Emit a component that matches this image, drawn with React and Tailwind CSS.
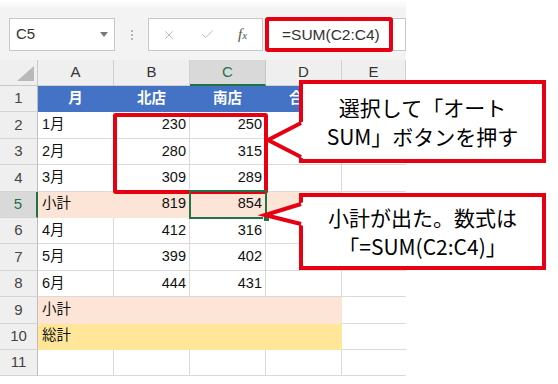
import { X, Check } from 'lucide-react';

const cols = ['A', 'B', 'C', 'D', 'E'];

const rows = [
    { n: 1, fill: 'head', cells: ['月', '北店', '南店', '合計'] },
    { n: 2, cells: ['1月', 230, 250] },
    { n: 3, cells: ['2月', 280, 315] },
    { n: 4, cells: ['3月', 309, 289] },
    { n: 5, fill: 'peach', cells: ['小計', 819, 854] },
    { n: 6, cells: ['4月', 412, 316] },
    { n: 7, cells: ['5月', 399, 402] },
    { n: 8, cells: ['6月', 444, 431] },
    { n: 9, fill: 'peach', cells: ['小計'] },
    { n: 10, fill: 'yellow', cells: ['総計'] },
    { n: 11, cells: [] },
];

const fills = {
    head: 'bg-[#4472c4] border-[#4472c4] text-white font-bold',
    peach: 'bg-[#fce4d6] border-[#fce4d6]',
    yellow: 'bg-[#ffe699] border-[#ffe699]',
};

const font = 'font-["Liberation_Sans","Noto_Sans_CJK_JP",sans-serif]';

const Cell = ({ row, i }) => {
    const value = row.cells[i];
    const filled = row.fill && i < 4;
    let align = typeof value === 'number' ? 'justify-end pr-[3px]' : 'justify-start pl-[4px]';
    if (row.fill === 'head') align = 'justify-center';
    const border = i === 4 ? 'border-b' : 'border-r border-b';

    return (
        <div
            className={`flex items-center text-[14.5px] ${border} ${align} ${
                filled ? fills[row.fill] : 'bg-white border-[#dadada]'
            } ${row.fill === 'head' ? '' : 'text-[#111]'}`}
        >
            {value}
        </div>
    );
};

const Callout = ({ className, children }) => (
    <div
        className={`absolute flex flex-col items-center justify-center border-4 border-[#e60012] bg-white text-[21px] leading-[29px] text-black font-["Noto_Sans_CJK_JP",sans-serif] ${className}`}
    >
        {children}
    </div>
);

const App = () => {
    return (
        <div className={`relative h-[384px] w-[558px] overflow-hidden bg-white ${font}`}>
            <div className="w-[406px]">
                {/* toolbar */}
                <div className="h-[7px] bg-gradient-to-b from-white to-[#f6f6f6]" />
                <div className="flex h-[53px] items-start bg-[#f3f3f3] pl-[9px] pt-[11px]">
                    <div className="flex h-[33px] w-[106px] items-center justify-between border border-[#c8c8c8] bg-white pl-[6px] pr-[6px]">
                        <span className="text-[15px] text-[#333]">C5</span>
                        <svg width="8" height="5" viewBox="0 0 8 5">
                            <polygon points="0,0 8,0 4,5" fill="#777" />
                        </svg>
                    </div>
                    <div className="flex h-[33px] w-[33px] flex-col items-center justify-center gap-[2px]">
                        <div className="size-[2px] bg-[#b5b5b5]" />
                        <div className="size-[2px] bg-[#b5b5b5]" />
                        <div className="size-[2px] bg-[#b5b5b5]" />
                    </div>
                    <div className="flex h-[33px] w-[115px] items-center border border-[#c8c8c8] bg-white pl-[13px]">
                        <X size={14} strokeWidth={1.5} className="text-[#b3b3b3]" />
                        <Check size={15} strokeWidth={1.5} className="ml-[24px] text-[#b3b3b3]" />
                        <span className='ml-[23px] font-["Liberation_Serif",serif] text-[15px] italic text-[#555]'>
                            f<span className="text-[11px]">x</span>
                        </span>
                    </div>
                    <div className="ml-[2px] flex h-[33px] flex-1 items-center border border-[#c8c8c8] bg-white pl-[16px]">
                        <span className="text-[15.5px] text-[#333]">=SUM(C2:C4)</span>
                    </div>
                </div>

                {/* sheet */}
                <div className="grid grid-cols-[38px_76px_76px_76px_76px_64px] grid-rows-[26px_repeat(11,26.4px)]">
                    <div className="flex items-end justify-end border-b border-r border-[#c8c8c8] bg-[#efefef] pb-[4px] pr-[3px]">
                        <svg width="17" height="15" viewBox="0 0 17 15">
                            <polygon points="17,0 17,15 0,15" fill="#b9b9b9" />
                        </svg>
                    </div>
                    {cols.map(c => (
                        <div
                            key={c}
                            className={`flex items-center justify-center text-[15px] ${
                                c === 'C'
                                    ? 'border-b-2 border-r border-b-[#217346] border-r-[#c8c8c8] bg-[#d9d9d9] text-[#217346]'
                                    : 'border-b border-r border-[#d0d0d0] bg-[#efefef] text-[#333]'
                            }`}
                        >
                            {c}
                        </div>
                    ))}

                    {rows.map(row => (
                        <div key={row.n} className="contents">
                            <div
                                className={`flex items-center justify-center border-b border-b-[#d4d4d4] text-[15px] ${
                                    row.n === 5
                                        ? 'border-r-2 border-r-[#217346] bg-[#d9d9d9] text-[#217346]'
                                        : 'border-r border-r-[#bdbdbd] bg-[#efefef] text-[#444]'
                                }`}
                            >
                                {row.n}
                            </div>
                            {cols.map((c, i) => (
                                <Cell key={c} row={row} i={i} />
                            ))}
                        </div>
                    ))}
                </div>
            </div>

            {/* formula bar highlight */}
            <div className="absolute left-[265px] top-[17px] h-[35px] w-[128px] rounded-[3px] border-4 border-[#e60012]" />

            {/* selected range B2:C4 */}
            <div className="absolute left-[113px] top-[113px] h-[81px] w-[155px] rounded-[3px] border-4 border-[#e60012]" />

            {/* active cell C5 */}
            <div className="absolute left-[189px] top-[190px] h-[29px] w-[78px] border-2 border-[#217346]" />
            <div className="absolute left-[263px] top-[215px] size-[7px] border border-white bg-[#217346]" />

            <Callout className="left-[299px] top-[80px] h-[83px] w-[247px]">
                <div>選択して「オート</div>
                <div>SUM」ボタンを押す</div>
            </Callout>

            <Callout className="left-[299px] top-[193px] h-[77px] w-[247px]">
                <div>小計が出た。数式は</div>
                <div>「=SUM(C2:C4)」</div>
            </Callout>

            {/* callout pointers */}
            <svg className="absolute left-0 top-0" width="558" height="384" viewBox="0 0 558 384">
                <polygon points="268,140 304,121 304,159" fill="white" />
                <polyline points="301,123 268,140 301,157" fill="none" stroke="#e60012" strokeWidth="4" />
                <polygon points="265,215 304,202 304,226" fill="white" />
                <polyline points="301,204 265,215 301,224" fill="none" stroke="#e60012" strokeWidth="4" />
            </svg>
        </div>
    );
};

export default App;
